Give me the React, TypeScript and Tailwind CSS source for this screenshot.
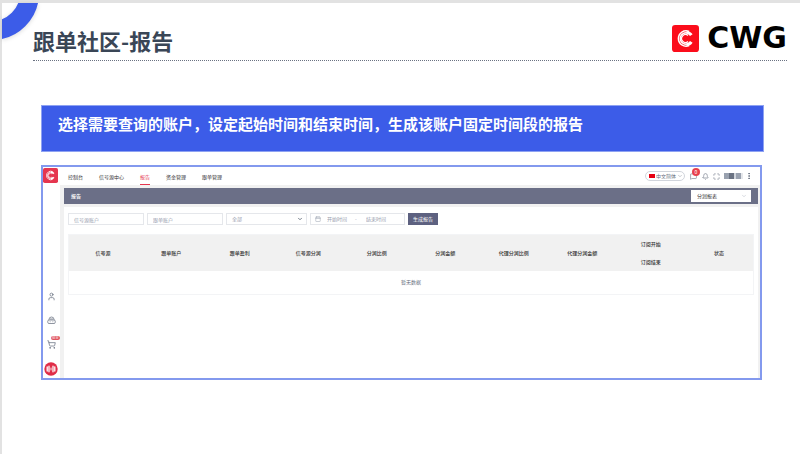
import { Bell, Calendar, ChevronDown, EllipsisVertical, Maximize, MessageSquare, ShoppingCart, User } from "lucide-react";

const navItems = ["控制台", "信号源中心", "报告", "资金管理", "跟单管理"];

const columns = [
  ["信号源"],
  ["跟单账户"],
  ["跟单盈利"],
  ["信号源分润"],
  ["分润比例"],
  ["分润金额"],
  ["代理分润比例"],
  ["代理分润金额"],
  ["订阅开始", "订阅结束"],
  ["状态"],
];

const CMark = ({ className, fill }: { className: string; fill: string }) => (
  <svg viewBox="0 0 26 26" className={className} aria-hidden="true">
    <rect width="26" height="26" rx="3" fill={fill} />
    <g fill="none" stroke="#fff">
      <path d="M16.5 6.2A7.4 7.4 0 1 0 16.5 19.8" strokeWidth="1.5" />
      <path d="M16.2 8.2A5.5 5.5 0 1 0 16.2 17.8" strokeWidth="1.4" />
      <path d="M15.4 10A3.8 3.8 0 1 0 15.4 16" strokeWidth="1.2" />
      <path d="M14 7.2A6 6 0 0 1 18.6 9.8M14 18.8A6 6 0 0 0 18.6 16.2" strokeWidth="3" />
    </g>
  </svg>
);

const Header = () => (
  <header className="ml-[31px] mr-[13px] flex h-[58px] items-end justify-between border-b border-dotted border-gray-500 pb-1">
    <h1 className="pb-[2px] text-[22px] leading-7 font-bold text-[#3a4656]">跟单社区-报告</h1>
    <a href="#" className="flex items-center gap-2 pb-1">
      <CMark className="size-[27px]" fill="#fb0d1b" />
      <span className="font-['DejaVu_Sans'] text-[30px] leading-7 font-bold text-black">CWG</span>
    </a>
  </header>
);

const RobotIcon = () => (
  <svg viewBox="0 0 18 18" className="size-[9px]" fill="none" stroke="currentColor" strokeWidth="1.5" aria-hidden="true">
    <path d="M4 8V7a5 5 0 0 1 10 0v1" />
    <rect x="1.5" y="8" width="15" height="7" rx="2.5" />
    <path d="M5.5 11.5h1.5M11 11.5h1.5M6 6h6" />
  </svg>
);

const Sidebar = () => (
  <aside className="flex w-[17px] shrink-0 flex-col items-start justify-between bg-white pt-px pb-[2px] text-gray-500">
    <CMark className="size-[15px]" fill="#e5364f" />
    <div className="flex w-4 flex-col items-center gap-[13px]">
      <div className="flex flex-col items-center gap-[15px]">
        <User className="size-[9px]" />
        <RobotIcon />
        <div className="relative">
          <ShoppingCart className="size-[9px]" />
          <span className="absolute -top-1 left-1 h-1 w-[9px] rounded-full bg-[#e0525f] text-center text-[3px] leading-[4px] text-white">
            NEW
          </span>
        </div>
      </div>
      <svg viewBox="0 0 14 14" className="size-[14px]" aria-hidden="true">
        <circle cx="7" cy="7" r="6.7" fill="#e02d48" />
        <g stroke="#fff" strokeLinecap="round">
          <path d="M3.2 5v4M5 4.2v5.6M9 4.2v5.6M10.8 5v4" strokeWidth="1.3" />
          <path d="M7 6v2" strokeWidth="0.9" />
        </g>
      </svg>
    </div>
  </aside>
);

const TopBar = () => (
  <div className="flex h-[18px] items-center justify-between bg-white pr-[7px] pl-2">
    <nav className="flex h-full gap-4 text-[#333]">
      {navItems.map((item) => (
        <a
          key={item}
          href="#"
          className={
            item === "报告"
              ? "flex items-center border-b border-[#e5364f] pt-[3px] text-[#e5364f]"
              : "flex items-center border-b border-transparent pt-[3px]"
          }
        >
          {item}
        </a>
      ))}
    </nav>
    <div className="flex items-center gap-1 text-gray-500">
      <label className="relative flex h-[10px] w-10 items-center rounded-full border border-gray-300 pl-[3px]">
        <span className="h-1 w-[6px] shrink-0 bg-[#e60012]" />
        <select aria-label="语言" className="w-full appearance-none pl-px outline-none">
          <option>中文简体</option>
        </select>
        <ChevronDown className="pointer-events-none absolute right-px size-[6px]" strokeWidth={1.5} />
      </label>
      <button className="relative ml-px" aria-label="消息">
        <MessageSquare className="size-[7px]" />
        <span className="absolute -top-[5px] left-[2px] size-2 rounded-full bg-[#e8404d] text-center leading-2 text-white">
          0
        </span>
      </button>
      <button className="ml-px" aria-label="通知">
        <Bell className="size-[7px]" />
      </button>
      <button aria-label="全屏">
        <Maximize className="size-[7px]" />
      </button>
      <div className="flex items-center gap-[2px]">
        <span className="flex h-[6px] w-[19px]">
          <span className="w-[5px] bg-gray-400" />
          <span className="w-[5px] bg-gray-500" />
          <span className="w-[2px] bg-gray-300" />
          <span className="w-[5px] bg-gray-400" />
          <span className="w-[2px] bg-gray-200" />
        </span>
        <button aria-label="更多">
          <EllipsisVertical className="size-2" strokeWidth={3} />
        </button>
      </div>
    </div>
  </div>
);

const Filters = () => (
  <form className="flex gap-[3px] text-gray-400">
    <input
      aria-label="信号源账户"
      placeholder="信号源账户"
      className="h-3 w-[76px] border border-gray-200 px-[5px] outline-none placeholder:text-gray-400"
    />
    <input
      aria-label="跟单账户"
      placeholder="跟单账户"
      className="h-3 w-[76px] border border-gray-200 px-[5px] outline-none placeholder:text-gray-400"
    />
    <label className="relative flex h-3 w-[81px] items-center border border-gray-200">
      <select aria-label="状态" className="w-full appearance-none px-[5px] outline-none">
        <option>全部</option>
      </select>
      <ChevronDown className="pointer-events-none absolute right-[3px] size-[6px] text-gray-600" strokeWidth={3} />
    </label>
    <div className="flex h-3 w-[95px] items-center border border-gray-200 pl-1">
      <Calendar className="mr-[6px] size-[6px]" />
      <input
        aria-label="开始时间"
        placeholder="开始时间"
        className="w-7 outline-none placeholder:text-gray-400"
      />
      <span className="w-[11px]">-</span>
      <input
        aria-label="结束时间"
        placeholder="结束时间"
        className="w-7 outline-none placeholder:text-gray-400"
      />
    </div>
    <button type="button" className="h-3 w-[30px] bg-[#5d6180] text-white">
      生成报告
    </button>
  </form>
);

const ReportTable = () => (
  <table className="mt-[9px] w-full table-fixed border-collapse border border-gray-100 text-center">
    <thead>
      <tr className="h-9 bg-[#f1f1f1] text-[#333]">
        {columns.map((lines) => (
          <th key={lines[0]} className="p-0 font-medium">
            {lines.map((line) => (
              <div key={line} className="leading-[18px]">
                {line}
              </div>
            ))}
          </th>
        ))}
      </tr>
    </thead>
    <tbody>
      <tr className="h-[23px]">
        <td colSpan={columns.length} className="p-0 text-gray-500">
          暂无数据
        </td>
      </tr>
    </tbody>
  </table>
);

const ReportPanel = () => (
  <section className="mr-[38px] flex min-h-[215px] border-2 border-[#8399ee] bg-[#f1f1f1] text-[5px] leading-[6px]">
    <Sidebar />
    <div className="flex grow flex-col">
      <TopBar />
      <div className="mt-[3px] mr-[2px] ml-1 flex h-4 items-center justify-between bg-[#6b6f87] px-[7px]">
        <h2 className="font-medium text-white">报告</h2>
        <label className="relative flex h-3 w-[60px] items-center bg-white text-[#333]">
          <select aria-label="报表类型" className="w-full appearance-none px-[6px] outline-none">
            <option>分润报表</option>
          </select>
          <ChevronDown className="pointer-events-none absolute right-1 size-[6px] text-gray-400" strokeWidth={1.5} />
        </label>
      </div>
      <div className="mt-[3px] mr-[2px] ml-1 grow bg-white px-1 pt-[6px]">
        <Filters />
        <ReportTable />
      </div>
    </div>
  </section>
);

export default function App() {
  return (
    <main
      lang="zh-CN"
      className="relative min-h-screen border-t-[3px] border-l-2 border-[#e2e2e2] bg-white font-['Noto_Sans_CJK_SC',sans-serif]"
    >
      <svg viewBox="0 0 44 44" className="absolute top-0 left-0 size-11 drop-shadow-sm" aria-hidden="true">
        <circle cx="-10" cy="-10" r="37.5" fill="none" stroke="#3c5ce8" strokeWidth="19" />
      </svg>
      <Header />
      <div className="mt-11 ml-[39px]">
        <p className="mr-9 h-[47px] border border-[#8ea2f2] bg-[#3c5ce8] px-4 pt-[7px] text-[15px] leading-[22px] font-bold text-white">
          选择需要查询的账户，设定起始时间和结束时间，生成该账户固定时间段的报告
        </p>
        <div className="h-[13px]" />
        <ReportPanel />
      </div>
    </main>
  );
}
